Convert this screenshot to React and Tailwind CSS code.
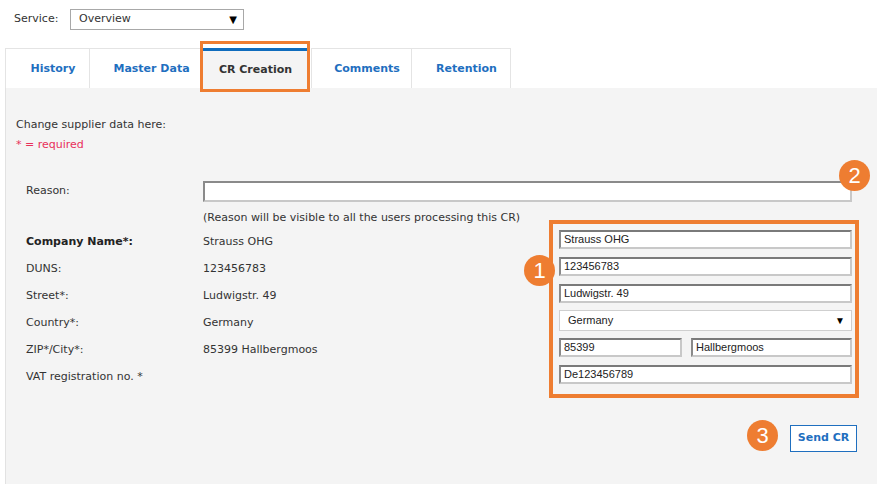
import React from 'react';

const font = { fontFamily: '"DejaVu Sans", Verdana, sans-serif' };

const tabs = [
  { label: 'History', w: 'w-[84px]' },
  { label: 'Master Data', w: 'w-[113px]' },
  { label: 'CR Creation', w: 'w-[106px]', active: true },
  { label: 'Comments', w: 'w-[100px]' },
  { label: 'Retention', w: 'w-[100px]' },
];

const rows = [
  { label: 'Company Name*:', bold: true, value: 'Strauss OHG', input: 'Strauss OHG' },
  { label: 'DUNS:', value: '123456783', input: '123456783' },
  { label: 'Street*:', value: 'Ludwigstr. 49', input: 'Ludwigstr. 49' },
  { label: 'Country*:', value: 'Germany', select: 'Germany' },
  { label: 'ZIP*/City*:', value: '85399 Hallbergmoos', zip: '85399', city: 'Hallbergmoos' },
  { label: 'VAT registration no. *', value: '', input: 'De123456789' },
];

const Field = ({ value, className = '' }) => (
  <div className={`h-[19px] bg-white border-2 border-[#8a8a8a] border-r-[#c8c8c8] border-b-[#c8c8c8] border-t-[#7a7a7a] px-[3px] flex items-center text-[11px] text-[#222] font-['Liberation_Sans',Arial,sans-serif] ${className}`}>
    {value}
  </div>
);

const Badge = ({ n, className }) => (
  <div className={`absolute w-[31px] h-[31px] rounded-full bg-[#ee7d31] text-white flex items-center justify-center text-[22px] font-['Liberation_Sans',Arial,sans-serif] ${className}`}>
    {n}
  </div>
);

export default function App() {
  return (
    <div className="w-[877px] h-[484px] bg-white relative overflow-hidden text-[#333]" style={font}>
      <div className="flex items-center pl-[14px] pt-[9px] h-[30px]">
        <span className="text-[11px] w-[56px]">Service:</span>
        <div className="w-[174px] h-[21px] border border-[#a8a8a8] bg-white flex items-center justify-between pl-[8px] pr-[6px] text-[11px]">
          <span>Overview</span>
          <span className="text-[10px] text-black">▼</span>
        </div>
      </div>

      <div className="flex ml-[5px] mt-[18px] h-[40px]">
        {tabs.map((t) => (
          <div
            key={t.label}
            className={`${t.w} ${t.label === 'Comments' ? 'ml-[3px]' : ''} h-[40px] flex items-center justify-center text-[11px] font-bold border-l border-t border-[#e4e4e4] last:border-r ${
              t.active ? 'bg-[#f4f4f4] text-[#333] border-t-[3px] border-t-[#0f6cbd] pt-[1px]' : 'bg-white text-[#1f6fbf] pl-[11px] pt-[2px]'
            }`}
          >
            {t.label}
          </div>
        ))}
      </div>

      <div className="ml-[5px] h-[396px] bg-[#f4f4f4] border-l border-[#e2e2e2] pl-[10px] pt-[29px] text-[11px]">
        <div>Change supplier data here:</div>
        <div className="text-[#e8305a] mt-[3px]">* = required</div>

        <div className="pl-[10px] mt-[27px]">
          <div className="flex items-center h-[22px]">
            <div className="w-[177px]">Reason:</div>
            <div className="w-[649px] h-[21px] bg-white border-2 border-[#8a8a8a] border-r-[#c8c8c8] border-b-[#c8c8c8]" />
          </div>
          <div className="pl-[177px] mt-[8px] h-[14px]">(Reason will be visible to all the users processing this CR)</div>

          <div className="mt-[6px] flex flex-col gap-[8px]">
            {rows.map((r) => (
              <div key={r.label} className="flex items-center h-[19px]">
                <div className={`w-[177px] pt-[6px] ${r.bold ? 'font-bold text-[#222]' : ''}`}>{r.label}</div>
                <div className="w-[356px] pt-[6px]">{r.value}</div>
                <div className="w-[293px]">
                  {r.input && <Field value={r.input} />}
                  {r.select && (
                    <div className="h-[21px] -mt-[1px] bg-white border border-[#cfcfcf] flex items-center justify-between pl-[8px] pr-[6px] text-[11px] font-['Liberation_Sans',Arial,sans-serif] text-[#222]">
                      <span>{r.select}</span>
                      <span className="text-[10px] text-black">▼</span>
                    </div>
                  )}
                  {r.zip && (
                    <div className="flex gap-[9px]">
                      <Field value={r.zip} className="w-[123px]" />
                      <Field value={r.city} className="flex-1" />
                    </div>
                  )}
                </div>
              </div>
            ))}
          </div>
        </div>

        <div className="flex justify-end pr-[20px] mt-[41px]">
          <button className="w-[67px] h-[27px] bg-white border border-[#1f6fbf] text-[#1f6fbf] font-bold text-[11px]">
            Send CR
          </button>
        </div>
      </div>

      {/* annotation overlays */}
      <div className="absolute left-[200px] top-[41px] w-[110px] h-[51px] border-[3px] border-[#ee7d31]" />
      <div className="absolute left-[549px] top-[220px] w-[310px] h-[178px] border-[4px] border-[#ee7d31]" />
      <Badge n="1" className="left-[524px] top-[255px]" />
      <Badge n="2" className="left-[839px] top-[160px]" />
      <Badge n="3" className="left-[747px] top-[420px]" />
    </div>
  );
}
